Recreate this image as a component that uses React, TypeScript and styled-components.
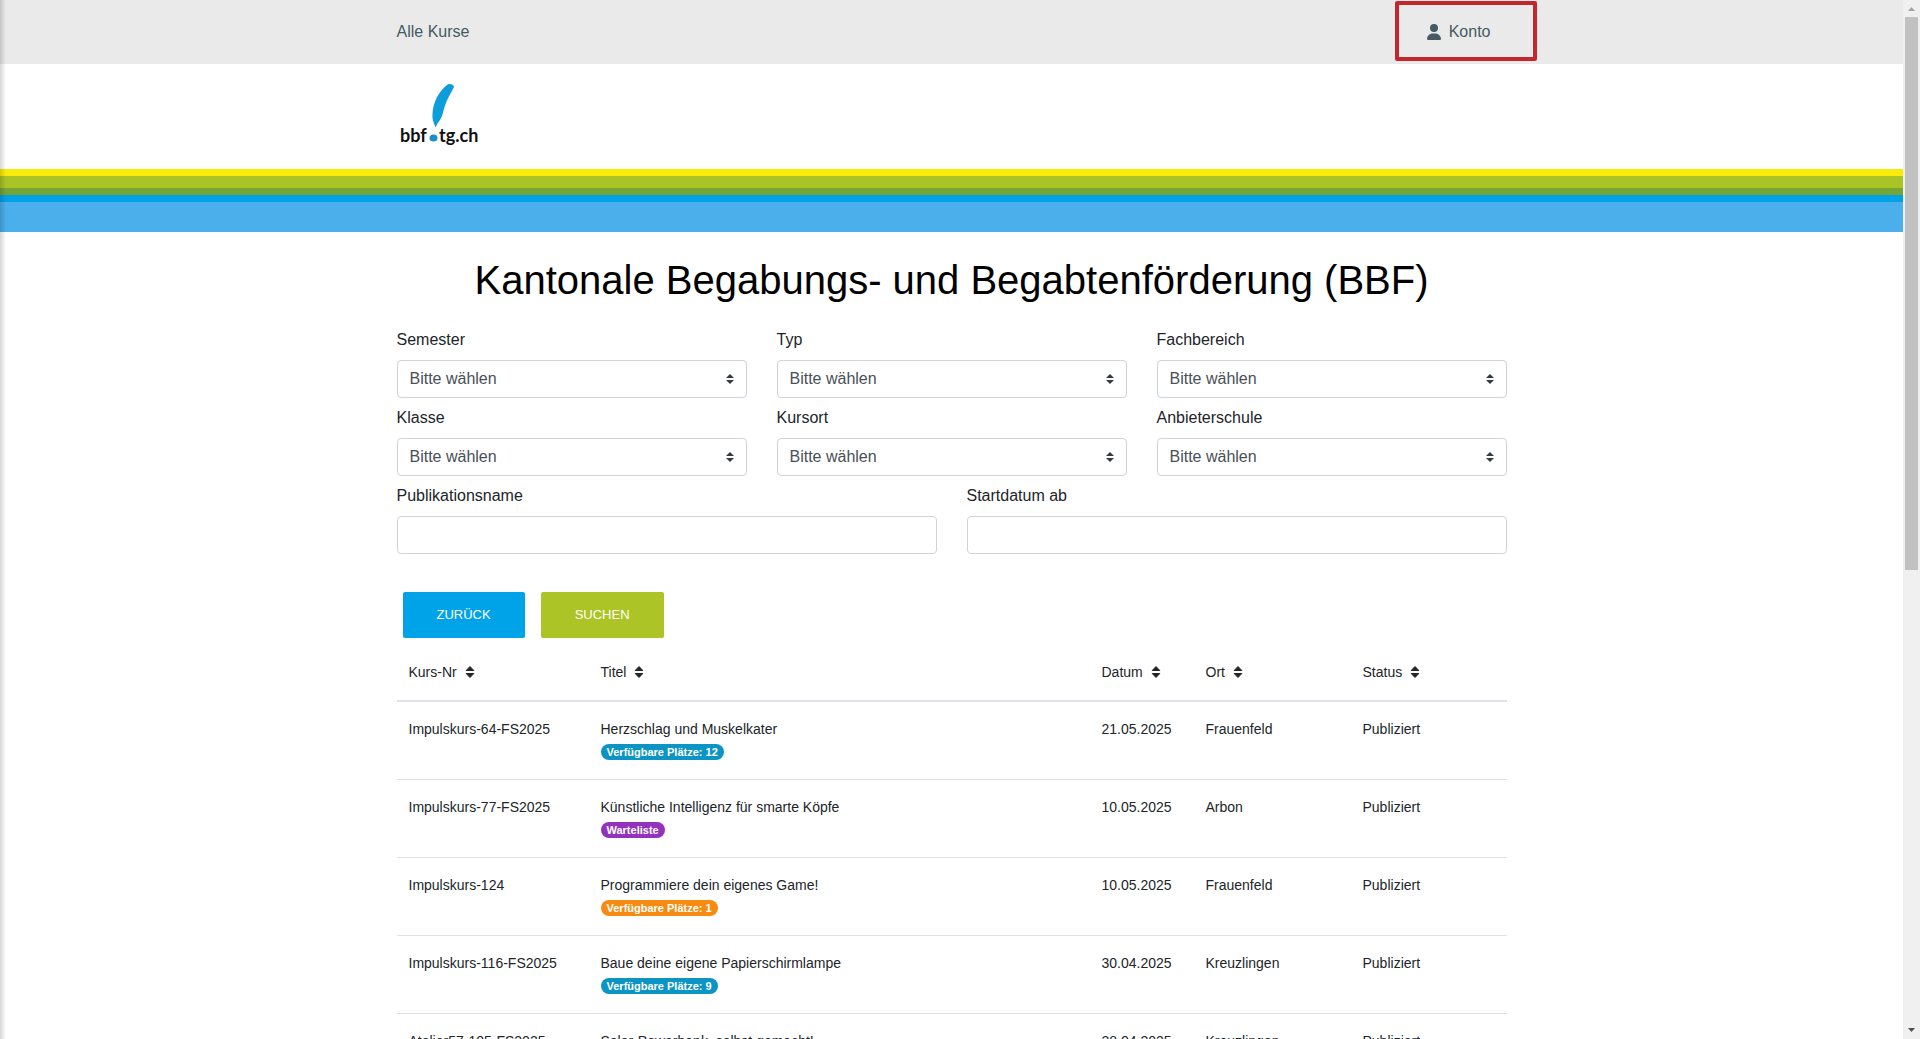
import React from "react";
import styled, { createGlobalStyle } from "styled-components";

const GlobalStyle = createGlobalStyle`
  *, *::before, *::after { box-sizing: border-box; }
  body {
    margin: 0;
    overflow: hidden;
    background: #fff;
    color: #212529;
    font-family: "Liberation Sans", Arial, sans-serif;
    font-size: 16px;
    line-height: 24px;
  }
`;

const Window = styled.div`
  position: relative;
  display: flex;
  height: 100vh;
`;

const Page = styled.div`
  flex: 1;
  min-width: 0;
  overflow-y: auto;
  scrollbar-width: none;
`;

const EdgeShadow = styled.div`
  position: absolute;
  inset: 0 auto 0 0;
  width: 6px;
  pointer-events: none;
  background: linear-gradient(to right, rgba(0, 0, 0, 0.16), rgba(0, 0, 0, 0));
`;

const Container = styled.div`
  width: 100%;
  max-width: 1140px;
  margin: 0 auto;
  padding: 0 15px;
`;

const TopBar = styled.nav`
  background: #eaeaea;
`;

const TopBarRow = styled(Container)`
  display: flex;
  align-items: center;
  justify-content: space-between;
  height: 64px;
`;

const NavLink = styled.a`
  color: #455a64;
  text-decoration: none;
`;

const AccountLink = styled(NavLink)`
  position: relative;
  display: flex;
  align-items: center;
  gap: 8px;
  padding: 0 16px;

  svg { display: block; }
`;

const Highlight = styled.span`
  position: absolute;
  inset: -19px -30px -17px -16px;
  border: 4px solid #c1272d;
  border-radius: 2px;
`;

const Header = styled.header`
  svg { display: block; }
`;

const HeaderRow = styled(Container)`
  display: flex;
  align-items: center;
  height: 105px;
`;

const Stripe = styled.div<{ $color: string; $height: number }>`
  height: ${(p) => p.$height}px;
  background: ${(p) => p.$color};
`;

const Title = styled.h1`
  margin: 24px 0;
  color: #000;
  font-size: 40px;
  font-weight: 400;
  line-height: 48px;
  text-align: center;
`;

const FieldGrid = styled.div<{ $columns: number }>`
  display: grid;
  grid-template-columns: repeat(${(p) => p.$columns}, 1fr);
  gap: 8px 30px;
  margin-bottom: 8px;
`;

const Field = styled.div`
  display: flex;
  flex-direction: column;
  gap: 8px;
`;

const SelectBox = styled.div`
  position: relative;

  svg {
    position: absolute;
    top: 14px;
    right: 13px;
    pointer-events: none;
  }
`;

const Select = styled.select`
  display: block;
  width: 100%;
  height: 38px;
  padding: 0 28px 0 12px;
  appearance: none;
  border: 1px solid #ced4da;
  border-radius: 4px;
  background: #fff;
  color: #495057;
  font: inherit;
`;

const Input = styled.input`
  width: 100%;
  height: 38px;
  padding: 0 12px;
  border: 1px solid #ced4da;
  border-radius: 4px;
  background: #fff;
  color: #495057;
  font: inherit;
`;

const Actions = styled.div`
  display: flex;
  gap: 16px;
  margin: 38px 6px 0;
`;

const Button = styled.button<{ $color: string }>`
  height: 46px;
  padding: 0 34px;
  border: 0;
  border-radius: 2px;
  background: ${(p) => p.$color};
  color: #fff;
  font: inherit;
  font-size: 13px;
  font-weight: 500;
  text-transform: uppercase;
`;

const Table = styled.table`
  width: 100%;
  border-collapse: separate;
  border-spacing: 0;
  table-layout: fixed;
  font-size: 14px;
  line-height: 22px;
`;

const HeadCell = styled.th<{ $width?: number }>`
  width: ${(p) => (p.$width ? `${p.$width}px` : "auto")};
  padding: 23px 12px 17px;
  border-bottom: 2px solid #dee2e6;
  font-weight: 400;
  text-align: left;
`;

const SortButton = styled.button`
  display: flex;
  align-items: center;
  gap: 8px;
  padding: 0;
  border: 0;
  background: none;
  color: #212529;
  font: inherit;
`;

const Cell = styled.td`
  height: 78px;
  padding: 16px 12px;
  border-bottom: 1px solid #dee2e6;
  vertical-align: top;
`;

const Badge = styled.span<{ $color: string }>`
  display: block;
  width: fit-content;
  margin-top: 4px;
  padding: 0 6px;
  border-radius: 8px;
  background: ${(p) => p.$color};
  color: #fff;
  font-size: 11px;
  font-weight: 700;
  line-height: 16px;
`;

const ScrollBar = styled.div`
  display: flex;
  flex-direction: column;
  align-items: center;
  width: 17px;
  background: #f0f0f0;

  svg { display: block; flex: none; }
`;

const ScrollTrack = styled.div`
  flex: 1;
  width: 13px;
`;

const ScrollThumb = styled.div`
  height: 55%;
  background: #c1c1c1;
`;

const filters = [
  { id: "semester", label: "Semester" },
  { id: "typ", label: "Typ" },
  { id: "fachbereich", label: "Fachbereich" },
  { id: "klasse", label: "Klasse" },
  { id: "kursort", label: "Kursort" },
  { id: "anbieterschule", label: "Anbieterschule" },
];

const columns: { label: string; width?: number }[] = [
  { label: "Kurs-Nr", width: 192 },
  { label: "Titel" },
  { label: "Datum", width: 104 },
  { label: "Ort", width: 157 },
  { label: "Status", width: 156 },
];

const BLUE = "#0c94c4";
const PURPLE = "#9333bd";
const ORANGE = "#f78b12";

const courses = [
  { nr: "Impulskurs-64-FS2025", title: "Herzschlag und Muskelkater", badge: "Verfügbare Plätze: 12", color: BLUE, date: "21.05.2025", place: "Frauenfeld" },
  { nr: "Impulskurs-77-FS2025", title: "Künstliche Intelligenz für smarte Köpfe", badge: "Warteliste", color: PURPLE, date: "10.05.2025", place: "Arbon" },
  { nr: "Impulskurs-124", title: "Programmiere dein eigenes Game!", badge: "Verfügbare Plätze: 1", color: ORANGE, date: "10.05.2025", place: "Frauenfeld" },
  { nr: "Impulskurs-116-FS2025", title: "Baue deine eigene Papierschirmlampe", badge: "Verfügbare Plätze: 9", color: BLUE, date: "30.04.2025", place: "Kreuzlingen" },
  { nr: "Atelier57-105-FS2025", title: "Solar-Powerbank, selbst gemacht!", badge: "Verfügbare Plätze: 4", color: BLUE, date: "28.04.2025", place: "Kreuzlingen" },
];

const Logo = () => (
  <svg width="84" height="80" viewBox="0 0 84 80" role="img" aria-label="bbf.tg.ch">
    <path d="M50 8C52 6 57 7.500 57 10C54 16 50 22 47.500 30C46 35 45.500 39 43 43C41 45 40 48 38.500 50.500C37 46 35 43 35.500 37C36 25 42 14 50 8Z" fill="#0d9ddb" />
    <ellipse cx="36.500" cy="61" rx="4" ry="3.600" fill="#1c8fc4" />
    <g fill="#111" fontFamily="Lato, sans-serif" fontSize="18" fontWeight="700">
      <text x="3" y="65">bbf</text>
      <text x="42" y="65">tg.ch</text>
    </g>
  </svg>
);

const UserIcon = () => (
  <svg width="14" height="16" viewBox="0 0 448 512" fill="currentColor" aria-hidden="true">
    <path d="M224 256a128 128 0 1 0 0-256 128 128 0 1 0 0 256zm-46 48C80 304 0 384 0 482c0 17 13 30 30 30h388c17 0 30-13 30-30 0-98-80-178-178-178z" />
  </svg>
);

const SelectArrows = () => (
  <svg width="8" height="10" viewBox="0 0 4 5" fill="#343a40" aria-hidden="true">
    <path d="M2 0L0 2h4zm0 5L0 3h4z" />
  </svg>
);

const SortIcon = () => (
  <svg width="10" height="14" viewBox="0 0 10 14" fill="currentColor" stroke="currentColor" strokeLinejoin="round" aria-hidden="true">
    <path d="M5 1.500L1.200 5.500h7.600zM5 12.500L1.200 8.500h7.600z" />
  </svg>
);

export default function App() {
  return (
    <>
      <GlobalStyle />
      <Window>
        <Page>
          <TopBar>
            <TopBarRow>
              <NavLink href="#kurse">Alle Kurse</NavLink>
              <AccountLink href="#konto">
                <UserIcon />
                Konto
                <Highlight />
              </AccountLink>
            </TopBarRow>
          </TopBar>
          <Header>
            <HeaderRow>
              <Logo />
            </HeaderRow>
            <Stripe $color="#faec0a" $height={7} />
            <Stripe $color="#aac426" $height={12} />
            <Stripe $color="#74a536" $height={7} />
            <Stripe $color="#00a1e6" $height={7} />
            <Stripe $color="#4aafea" $height={30} />
          </Header>
          <Container as="main">
            <Title>Kantonale Begabungs- und Begabtenförderung (BBF)</Title>
            <form>
              <FieldGrid $columns={3}>
                {filters.map((f) => (
                  <Field key={f.id}>
                    <label htmlFor={f.id}>{f.label}</label>
                    <SelectBox>
                      <Select id={f.id}>
                        <option>Bitte wählen</option>
                      </Select>
                      <SelectArrows />
                    </SelectBox>
                  </Field>
                ))}
              </FieldGrid>
              <FieldGrid $columns={2}>
                <Field>
                  <label htmlFor="name">Publikationsname</label>
                  <Input id="name" type="text" />
                </Field>
                <Field>
                  <label htmlFor="start">Startdatum ab</label>
                  <Input id="start" type="text" />
                </Field>
              </FieldGrid>
              <Actions>
                <Button type="button" $color="#00a3e8">Zurück</Button>
                <Button type="submit" $color="#acc426">Suchen</Button>
              </Actions>
            </form>
            <Table>
              <thead>
                <tr>
                  {columns.map((c) => (
                    <HeadCell key={c.label} $width={c.width} scope="col">
                      <SortButton type="button">
                        {c.label}
                        <SortIcon />
                      </SortButton>
                    </HeadCell>
                  ))}
                </tr>
              </thead>
              <tbody>
                {courses.map((c) => (
                  <tr key={c.nr}>
                    <Cell>{c.nr}</Cell>
                    <Cell>
                      {c.title}
                      <Badge $color={c.color}>{c.badge}</Badge>
                    </Cell>
                    <Cell>{c.date}</Cell>
                    <Cell>{c.place}</Cell>
                    <Cell>Publiziert</Cell>
                  </tr>
                ))}
              </tbody>
            </Table>
          </Container>
        </Page>
        <ScrollBar aria-hidden="true">
          <svg width="17" height="17" viewBox="0 0 17 17">
            <path d="M5 11L8.500 7L12 11Z" fill="#a3a3a3" />
          </svg>
          <ScrollTrack>
            <ScrollThumb />
          </ScrollTrack>
          <svg width="17" height="17" viewBox="0 0 17 17">
            <path d="M5 6L8.500 10L12 6Z" fill="#505050" />
          </svg>
        </ScrollBar>
        <EdgeShadow />
      </Window>
    </>
  );
}
